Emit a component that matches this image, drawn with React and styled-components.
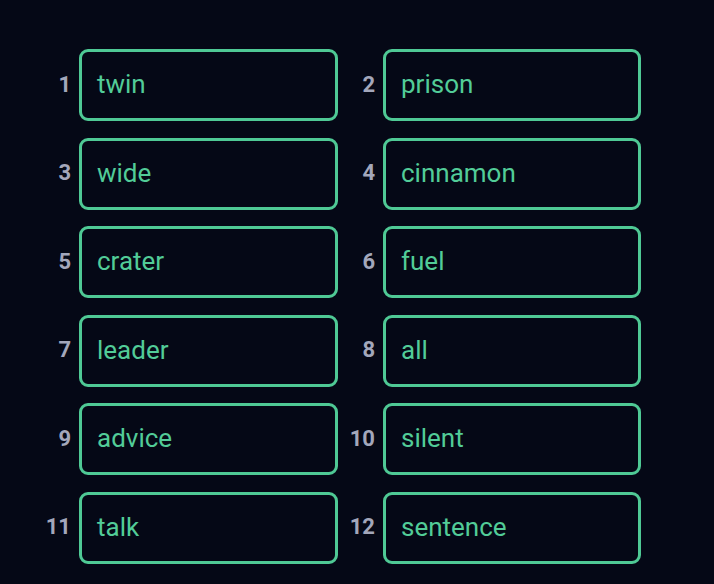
import styled, { createGlobalStyle } from "styled-components";

const words = [
  "twin",
  "prison",
  "wide",
  "cinnamon",
  "crater",
  "fuel",
  "leader",
  "all",
  "advice",
  "silent",
  "talk",
  "sentence",
];

const GlobalStyle = createGlobalStyle`
  html, body {
    margin: 0;
    padding: 0;
    background: #050816;
  }
  body {
    font-family: Roboto, "Liberation Sans", sans-serif;
  }
`;

const Page = styled.div`
  min-height: 584px;
  padding: 49px 0 0 41px;
  box-sizing: border-box;
  background: #050816;
`;

const Grid = styled.div`
  display: grid;
  grid-template-columns: 297px 296px;
  column-gap: 7px;
  row-gap: 16.6px;
`;

const Item = styled.div`
  display: flex;
  align-items: center;
  gap: 8px;
`;

const Index = styled.span`
  width: 30px;
  flex-shrink: 0;
  text-align: right;
  font-size: 22px;
  font-weight: 700;
  color: #a3a7bb;
  margin-top: -2px;
`;

const WordBox = styled.div`
  flex: 1;
  height: 72px;
  box-sizing: border-box;
  display: flex;
  align-items: center;
  padding: 0 0 2px 15px;
  border: 3px solid #4fc995;
  border-radius: 9px;
  font-size: 26px;
  color: #52cc98;
`;

export default function App() {
  return (
    <>
      <GlobalStyle />
      <Page>
        <Grid>
          {words.map((word, i) => (
            <Item key={word}>
              <Index>{i + 1}</Index>
              <WordBox>{word}</WordBox>
            </Item>
          ))}
        </Grid>
      </Page>
    </>
  );
}
